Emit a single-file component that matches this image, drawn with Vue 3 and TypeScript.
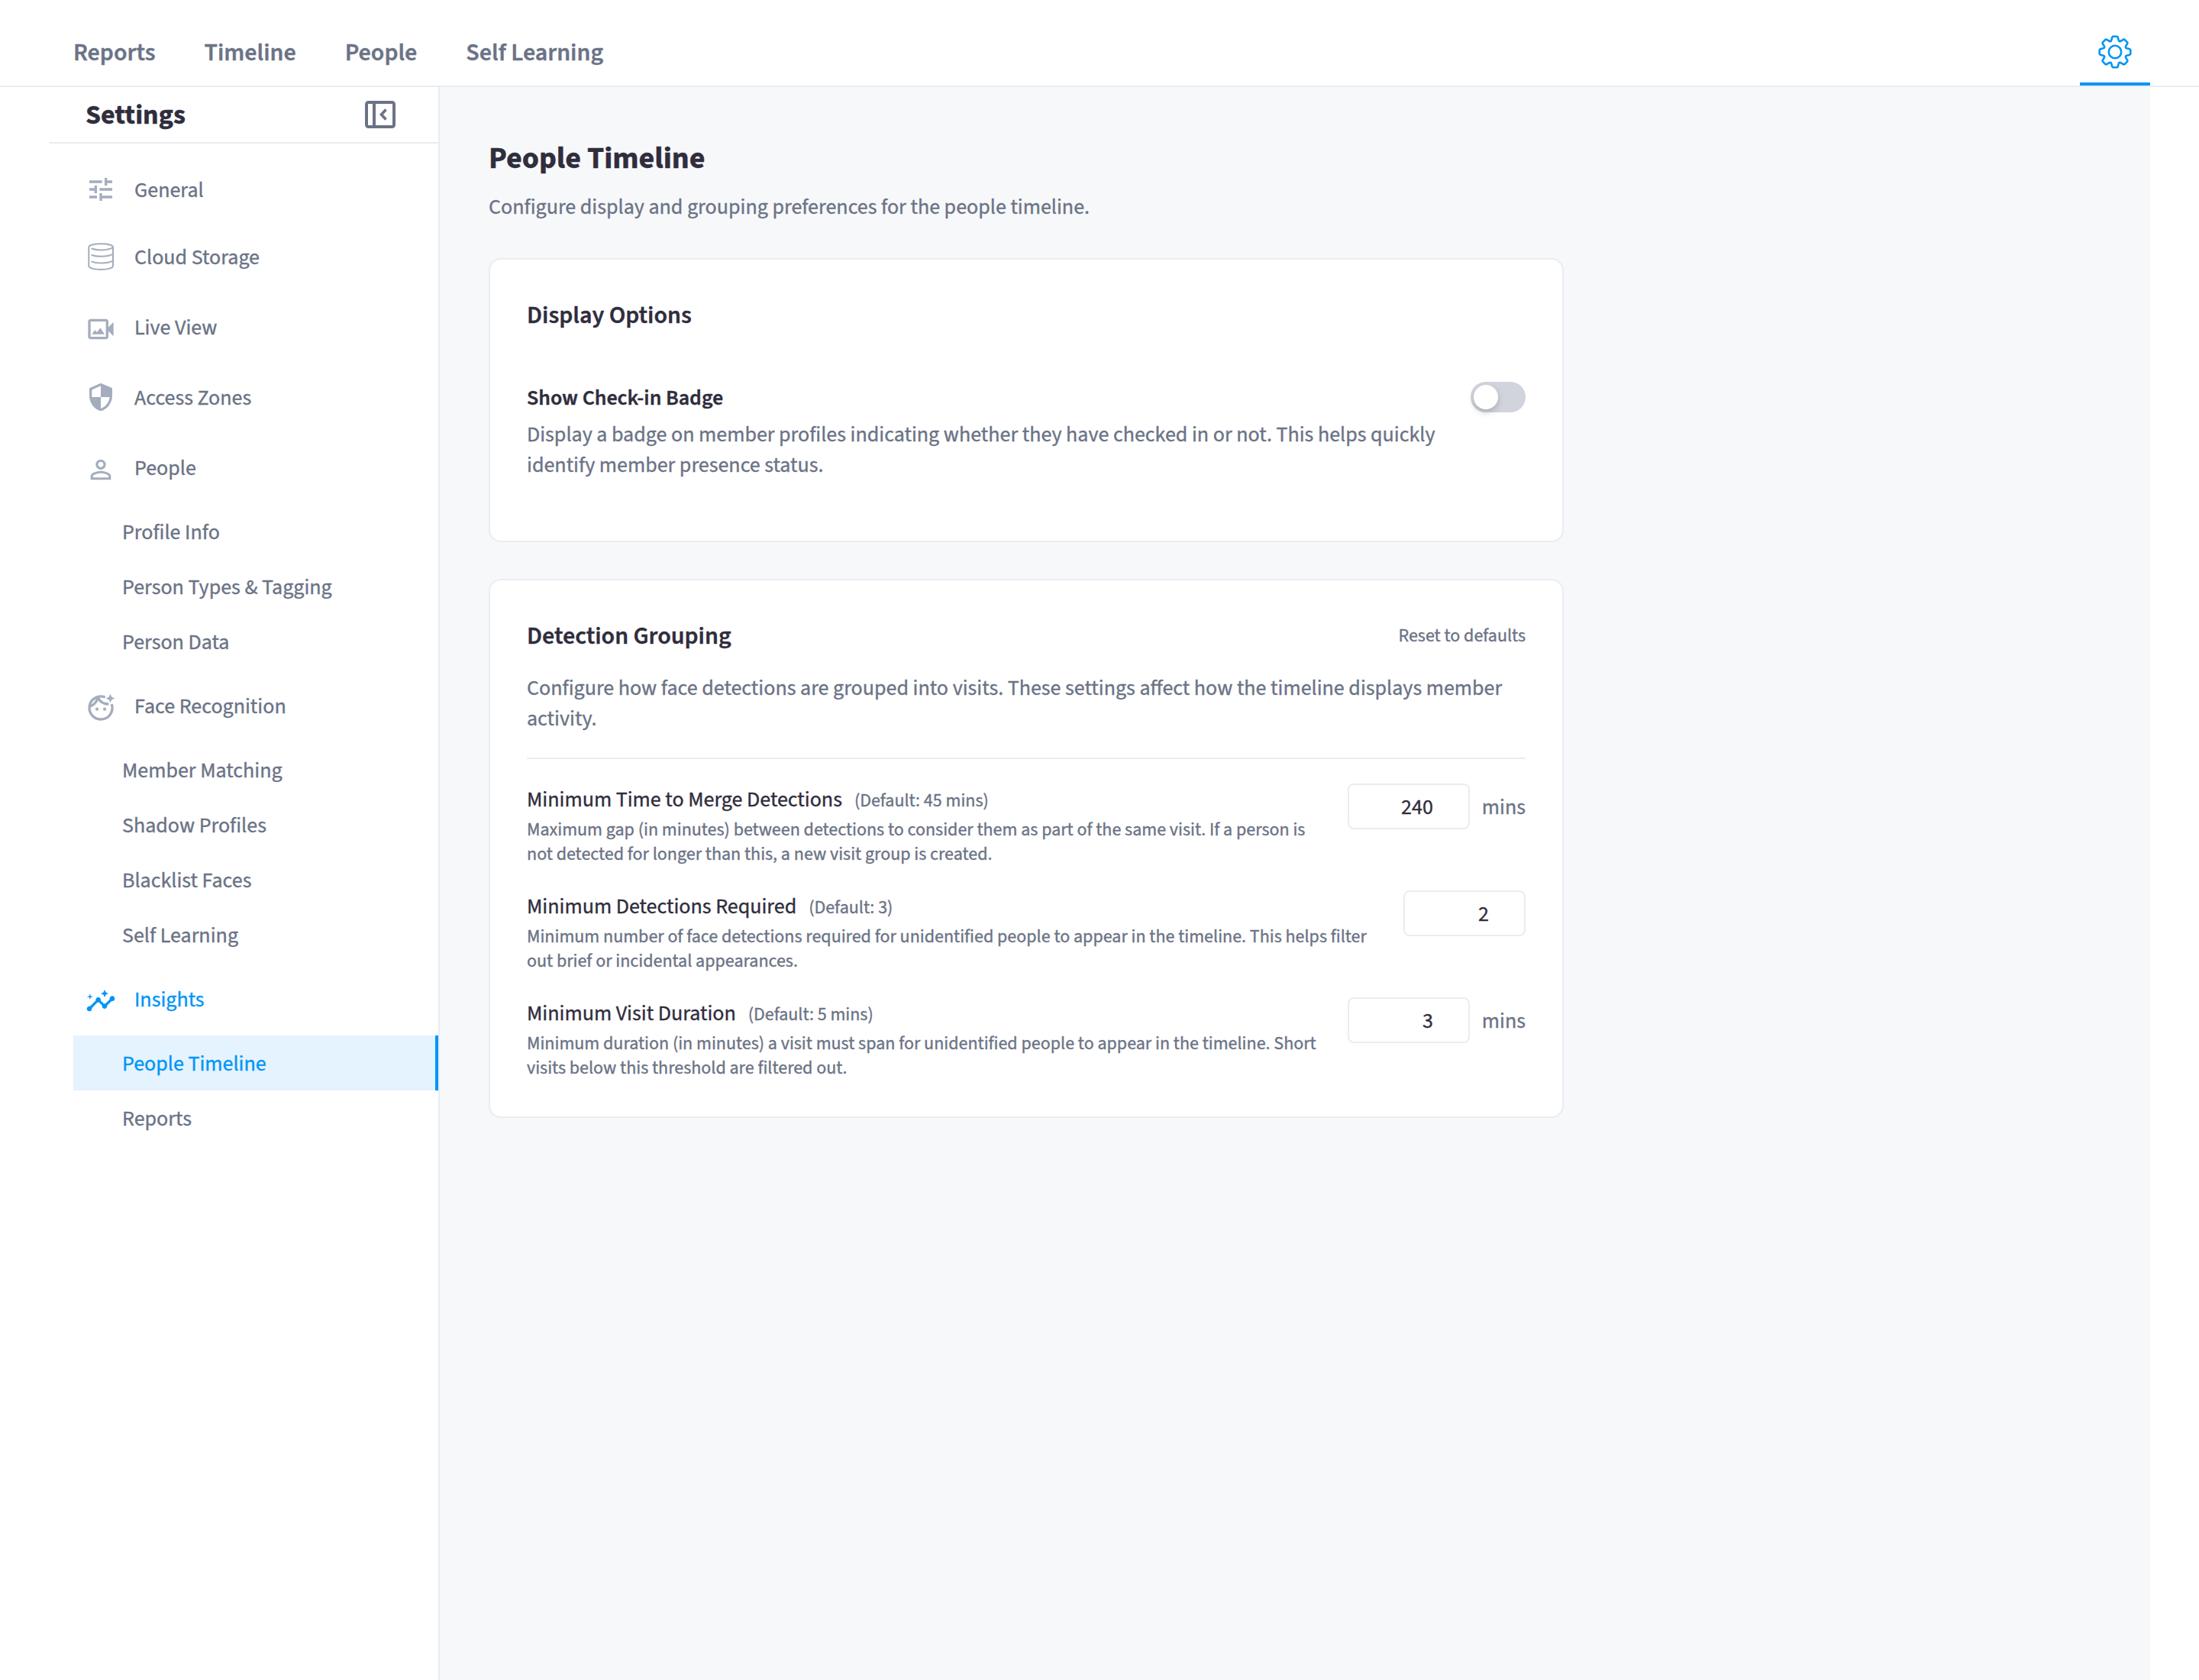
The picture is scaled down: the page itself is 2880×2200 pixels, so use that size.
<script setup lang="ts">
import { ref } from 'vue'

type IconName = 'tune' | 'database' | 'video' | 'shield' | 'person' | 'face' | 'insights'

interface MenuGroup {
  label: string
  icon: IconName
  tall?: boolean
  active?: boolean
  children?: { label: string; active?: boolean }[]
}

interface GroupingField {
  label: string
  hint: string
  text: string
  value: number
  unit?: string
}

const tabs: string[] = ['Reports', 'Timeline', 'People', 'Self Learning']

const menu: MenuGroup[] = [
  { label: 'General', icon: 'tune' },
  { label: 'Cloud Storage', icon: 'database' },
  { label: 'Live View', icon: 'video', tall: true },
  { label: 'Access Zones', icon: 'shield' },
  {
    label: 'People',
    icon: 'person',
    tall: true,
    children: [{ label: 'Profile Info' }, { label: 'Person Types & Tagging' }, { label: 'Person Data' }],
  },
  {
    label: 'Face Recognition',
    icon: 'face',
    tall: true,
    children: [
      { label: 'Member Matching' },
      { label: 'Shadow Profiles' },
      { label: 'Blacklist Faces' },
      { label: 'Self Learning' },
    ],
  },
  {
    label: 'Insights',
    icon: 'insights',
    tall: true,
    active: true,
    children: [{ label: 'People Timeline', active: true }, { label: 'Reports' }],
  },
]

const fields = ref<GroupingField[]>([
  {
    label: 'Minimum Time to Merge Detections',
    hint: '(Default: 45 mins)',
    text: 'Maximum gap (in minutes) between detections to consider them as part of the same visit. If a person is not detected for longer than this, a new visit group is created.',
    value: 240,
    unit: 'mins',
  },
  {
    label: 'Minimum Detections Required',
    hint: '(Default: 3)',
    text: 'Minimum number of face detections required for unidentified people to appear in the timeline. This helps filter out brief or incidental appearances.',
    value: 2,
  },
  {
    label: 'Minimum Visit Duration',
    hint: '(Default: 5 mins)',
    text: 'Minimum duration (in minutes) a visit must span for unidentified people to appear in the timeline. Short visits below this threshold are filtered out.',
    value: 3,
    unit: 'mins',
  },
])

const showBadge = ref(false)

/* Outline of an eight-tooth cog centred on the origin. */
function cogPath(): string {
  const tooth: [number, number][] = [
    [-5.2, -14.3],
    [-4.4, -16.4],
    [-3.7, -19.4],
    [-2.7, -20.3],
    [2.7, -20.3],
    [3.7, -19.4],
    [4.4, -16.4],
    [5.2, -14.3],
  ]
  const points: string[] = []
  for (let i = 0; i < 8; i++) {
    const a = (i * Math.PI) / 4
    for (const [x, y] of tooth) {
      const px = x * Math.cos(a) - y * Math.sin(a)
      const py = x * Math.sin(a) + y * Math.cos(a)
      points.push(`${px.toFixed(2)} ${py.toFixed(2)}`)
    }
  }
  return `M${points.join('L')}Z`
}
const cog = cogPath()
</script>

<template>
  <div class="page">
    <header class="topbar">
      <nav class="tabs">
        <a v-for="t in tabs" :key="t" class="tab">{{ t }}</a>
      </nav>
      <a class="gear-tab">
        <svg class="gear" viewBox="-24 -24 48 48" fill="none" stroke="currentColor" stroke-width="2.6" stroke-linejoin="round">
          <path :d="cog" />
          <circle r="8.2" />
        </svg>
      </a>
    </header>

    <div class="body">
      <aside class="sidebar">
        <div class="side-head">
          <span class="side-title">Settings</span>
          <svg class="collapse" viewBox="0 0 40 36" fill="none" stroke="currentColor" stroke-width="4">
            <rect x="2" y="2" width="36" height="32" rx="2.5" />
            <path d="M12 2v32" />
            <path d="M27.5 11.5L21.5 18l6 6.5" stroke-width="3.6" />
          </svg>
        </div>

        <div class="menu">
          <template v-for="g in menu" :key="g.label">
            <div class="group" :class="{ tall: g.tall, current: g.active }">
              <svg v-if="g.icon === 'database'" class="icon" viewBox="0 0 40 40" fill="none" stroke="currentColor" stroke-width="2" stroke-linecap="round">
                <path d="M4.3 8C4.3 5 11 3.3 20.1 3.3S36 5 36 8v24c0 3-6.8 5-15.9 5S4.3 35 4.3 32z" />
                <path d="M8.3 9.5C14 11.9 28 12.5 35.6 8.4" />
                <path d="M8.3 18C14 20.3 28 20.8 35.6 16.9" />
                <path d="M8.3 26.6C14 29 28 29.5 35.6 25.6" />
              </svg>
              <svg v-else class="icon" viewBox="0 0 24 24" fill="currentColor">
                <path v-if="g.icon === 'tune'" d="M3 17v2h6v-2H3zM3 5v2h10V5H3zm10 16v-2h8v-2h-8v-2h-2v6h2zM7 9v2H3v2h4v2h2V9H7zm14 4v-2H11v2h10zm-6-4h2V7h4V5h-4V3h-2v6z" />
                <template v-else-if="g.icon === 'video'">
                  <path d="M18 10.48V6c0-1.1-.9-2-2-2H4c-1.1 0-2 .9-2 2v12c0 1.1.9 2 2 2h12c1.1 0 2-.9 2-2v-4.48l4 3.98v-11l-4 3.98zM16 18H4V6h12v12z" />
                  <path d="M11.67 11L9 14.47l-1.67-1.76L5 16h10z" />
                </template>
                <path v-else-if="g.icon === 'shield'" d="M12 1L3 5v6c0 5.55 3.84 10.74 9 12 5.16-1.26 9-6.45 9-12V5l-9-4zm0 10.99h7c-.53 4.12-3.28 7.79-7 8.94V12H5V6.3l7-3.11v8.8z" />
                <path v-else-if="g.icon === 'person'" d="M12 5.9c1.16 0 2.1.94 2.1 2.1s-.94 2.1-2.1 2.1S9.9 9.16 9.9 8s.94-2.1 2.1-2.1m0 9c2.97 0 6.1 1.46 6.1 2.1v1.1H5.9V17c0-.64 3.13-2.1 6.1-2.1M12 4C9.79 4 8 5.79 8 8s1.79 4 4 4 4-1.79 4-4-1.79-4-4-4zm0 9c-2.67 0-8 1.34-8 4v3h16v-3c0-2.66-5.33-4-8-4z" />
                <template v-else-if="g.icon === 'face'">
                  <path d="M15.4 3.66A9 9 0 1 0 20.5 9" fill="none" stroke="currentColor" stroke-width="2" />
                  <path d="M10 4.2C11.4 7.2 14.2 9 18.2 9M3.2 10.9C6.2 9.9 8.6 7.7 9.7 4" fill="none" stroke="currentColor" stroke-width="2" />
                  <circle cx="9" cy="13" r="1.25" />
                  <circle cx="15" cy="13" r="1.25" />
                  <path d="M19.5 1l-1.09 2.41L16 4.5l2.41 1.09L19.5 8l1.09-2.41L23 4.5l-2.41-1.09z" />
                </template>
                <path v-else d="M21 8c-1.45 0-2.26 1.44-1.93 2.51l-3.55 3.56c-.3-.09-.74-.09-1.04 0l-2.55-2.55C12.27 10.45 11.46 9 10 9c-1.45 0-2.27 1.44-1.93 2.52l-4.56 4.55C2.44 15.74 1 16.55 1 18c0 1.1.9 2 2 2 1.45 0 2.26-1.44 1.93-2.51l4.55-4.56c.3.09.74.09 1.04 0l2.55 2.55C12.73 16.55 13.54 18 15 18c1.45 0 2.27-1.44 1.93-2.52l3.56-3.55C21.56 12.26 23 11.45 23 10c0-1.1-.9-2-2-2zM15 9l.94-2.07L18 6l-2.06-.93L15 3l-.92 2.07L12 6l2.08.93zM3.5 11L4 9l2-.5L4 8l-.5-2L3 8l-2 .5L3 9z" />
              </svg>
              <span>{{ g.label }}</span>
            </div>
            <div v-for="c in g.children ?? []" :key="g.label + c.label" class="item" :class="{ active: c.active }">
              {{ c.label }}
            </div>
          </template>
        </div>
      </aside>

      <main class="content">
        <h1>People Timeline</h1>
        <p class="lead">Configure display and grouping preferences for the people timeline.</p>

        <section class="card display">
          <h2>Display Options</h2>
          <div class="option">
            <div class="option-text">
              <h3>Show Check-in Badge</h3>
              <p>Display a badge on member profiles indicating whether they have checked in or not. This helps quickly identify member presence status.</p>
            </div>
            <button class="switch" :class="{ on: showBadge }" role="switch" :aria-checked="showBadge" @click="showBadge = !showBadge">
              <span class="knob"></span>
            </button>
          </div>
        </section>

        <section class="card">
          <div class="card-head">
            <h2>Detection Grouping</h2>
            <a class="reset">Reset to defaults</a>
          </div>
          <p class="intro">Configure how face detections are grouped into visits. These settings affect how the timeline displays member activity.</p>
          <div class="fields">
            <div v-for="f in fields" :key="f.label" class="field">
              <div class="field-text">
                <div class="field-title"><span>{{ f.label }}</span><small>{{ f.hint }}</small></div>
                <p>{{ f.text }}</p>
              </div>
              <div class="field-input">
                <div class="number">{{ f.value }}</div>
                <span v-if="f.unit" class="unit">{{ f.unit }}</span>
              </div>
            </div>
          </div>
        </section>
      </main>
    </div>
  </div>
</template>

<style>
body {
  margin: 0;
  background: #fff;
}
</style>

<style scoped>
.page {
  display: flex;
  flex-direction: column;
  width: 2880px;
  height: 2200px;
  overflow: hidden;
  box-sizing: border-box;
  font-family: "Source Sans 3", "Source Sans Pro", "Noto Sans CJK SC", sans-serif;
  font-size: 28px;
  line-height: 40px;
  color: #6b7386;
  -webkit-text-stroke: 0.35px currentColor;
}
h1, h2, h3, p {
  margin: 0;
}
.topbar {
  display: flex;
  justify-content: space-between;
  flex: none;
  height: 112px;
  padding: 0 64px 0 96px;
  border-bottom: 2px solid #e9edf1;
}
.tabs {
  display: flex;
  gap: 64px;
  padding-top: 46px;
}
.tab {
  font-size: 32px;
  line-height: 46px;
  font-weight: 600;
}
.gear-tab {
  display: flex;
  justify-content: center;
  box-sizing: border-box;
  width: 92px;
  padding-top: 44px;
  border-bottom: 4px solid #0095f7;
  color: #0095f7;
}
.gear {
  width: 48px;
  height: 48px;
}
.body {
  display: flex;
  flex: 1;
  min-height: 0;
  padding: 0 64px;
}
.sidebar {
  flex: none;
  width: 510px;
  border-right: 2px solid #e9edf1;
}
.side-head {
  display: flex;
  align-items: center;
  justify-content: space-between;
  height: 72px;
  padding: 0 56px 0 48px;
  border-bottom: 2px solid #e9edf1;
}
.side-title {
  padding-top: 2px;
  font-size: 36px;
  line-height: 52px;
  font-weight: 700;
  color: #302d3d;
}
.collapse {
  width: 40px;
  height: 36px;
}
.menu {
  padding: 16px 0 0 32px;
}
.group {
  display: flex;
  align-items: center;
  gap: 24px;
  height: 88px;
  padding-left: 16px;
}
.group span {
  padding-top: 2px;
}
.group .icon {
  width: 40px;
  height: 40px;
  color: #a4adbd;
}
.group.tall {
  height: 96px;
}
.group.tall .icon {
  margin-top: 6px;
}
.group.current,
.group.current .icon {
  color: #0095f7;
}
.item {
  box-sizing: border-box;
  height: 72px;
  padding: 17px 0 0 64px;
}
.item.active {
  background: #e5f3ff;
  border-right: 4px solid #0095f7;
  color: #0095f7;
}
.content {
  flex: 1;
  padding: 65px 0 0 64px;
  background: #f7f8fa;
}
h1 {
  font-size: 40px;
  line-height: 57px;
  font-weight: 700;
  color: #302d3d;
}
.lead {
  margin-top: 15px;
}
.card {
  box-sizing: border-box;
  width: 1408px;
  margin-top: 48px;
  padding: 49px 48px 48px;
  background: #fff;
  border: 2px solid #e9edf1;
  border-radius: 16px;
}
.card.display {
  height: 372px;
  margin-top: 47px;
}
h2 {
  font-size: 32px;
  line-height: 48px;
  font-weight: 600;
  color: #302d3d;
}
.option {
  display: flex;
  justify-content: space-between;
  gap: 32px;
  padding-top: 63px;
}
.option-text {
  padding-top: 1px;
}
h3 {
  margin-bottom: 8px;
  font-size: 28px;
  font-weight: 600;
  color: #302d3d;
}
.switch {
  display: block;
  flex: none;
  width: 72px;
  height: 40px;
  padding: 4px;
  border: 0;
  border-radius: 20px;
  background: #d1d4dc;
}
.switch.on {
  padding-left: 36px;
  background: #0095f7;
}
.knob {
  display: block;
  width: 32px;
  height: 32px;
  border-radius: 50%;
  background: #fff;
  box-shadow: 0 4px 8px rgba(0, 35, 11, 0.2);
}
.card-head {
  display: flex;
  align-items: center;
  justify-content: space-between;
}
.reset {
  font-size: 24px;
  line-height: 32px;
}
.intro {
  margin-top: 24px;
  padding-bottom: 31px;
  border-bottom: 2px solid #e9edf1;
}
.fields {
  display: grid;
  grid-auto-rows: 108px;
  gap: 32px;
  padding-top: 32px;
}
.field {
  display: flex;
  justify-content: space-between;
  gap: 32px;
}
.field-text {
  padding-top: 1px;
}
.field-title {
  display: flex;
  align-items: baseline;
  gap: 16px;
  height: 40px;
  color: #302d3d;
}
.field-title small {
  font-size: 24px;
  color: #6b7386;
}
.field-text p {
  margin-top: 4px;
  font-size: 24px;
  line-height: 32px;
}
.field-input {
  display: flex;
  flex: none;
  gap: 16px;
}
.number {
  box-sizing: border-box;
  width: 160px;
  height: 60px;
  padding: 9px 46px 0 20px;
  border: 2px solid #e9edf1;
  border-radius: 8px;
  text-align: right;
  color: #302d3d;
}
.unit {
  padding-top: 11px;
}
</style>
